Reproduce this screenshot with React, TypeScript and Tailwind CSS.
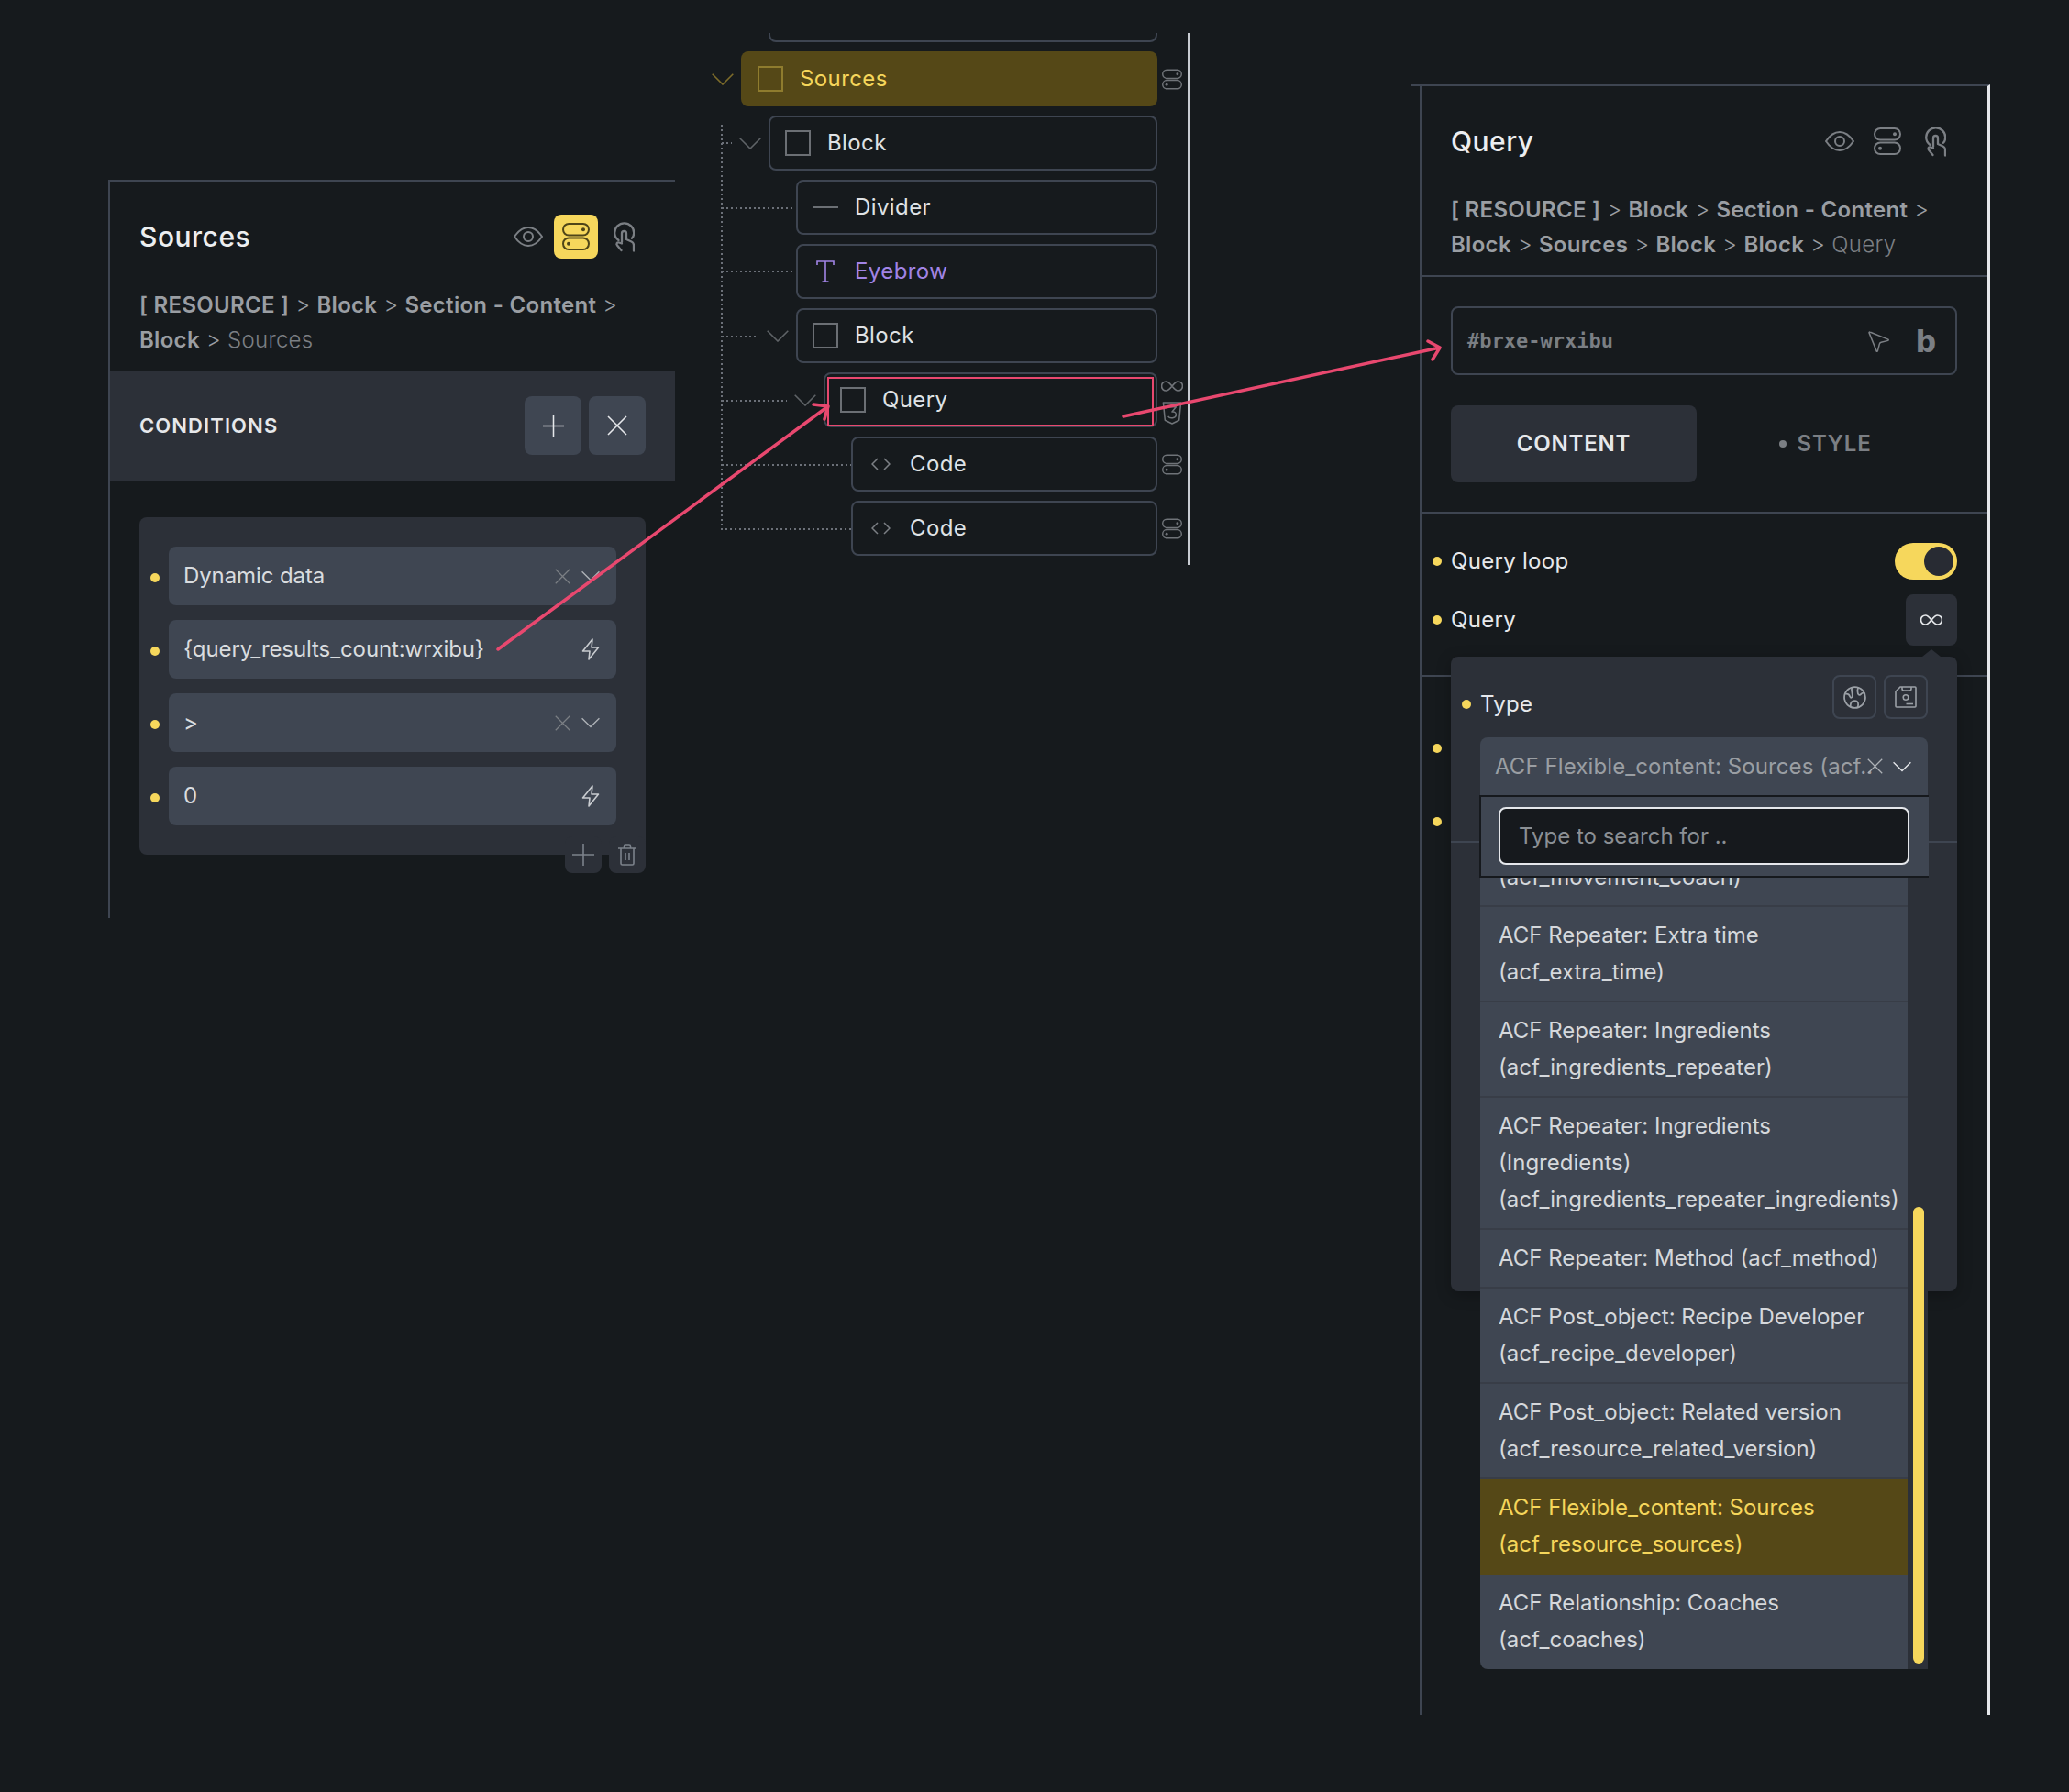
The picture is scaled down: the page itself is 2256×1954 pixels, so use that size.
import React from "react";
import { MousePointer2 } from "lucide-react";

type IP = { className?: string };

const Chevron = ({ className = "" }: IP) => (
  <svg viewBox="0 0 24 13" fill="none" stroke="currentColor" strokeWidth="1.6" className={className}>
    <polyline points="0.7,0.7 12,12 23.3,0.7" />
  </svg>
);
const Cross = ({ className = "" }: IP) => (
  <svg viewBox="0 0 22 22" fill="none" stroke="currentColor" strokeWidth="1.6" className={className}>
    <path d="M1 1 21 21M21 1 1 21" />
  </svg>
);
const Plus = ({ className = "" }: IP) => (
  <svg viewBox="0 0 24 24" fill="none" stroke="currentColor" strokeWidth="1.6" className={className}>
    <path d="M12 0V24M0 12H24" />
  </svg>
);
const Bolt = ({ className = "" }: IP) => (
  <svg viewBox="0 0 20 24" fill="none" stroke="currentColor" strokeWidth="1.6" strokeLinejoin="round" className={className}>
    <path d="M12 1 1.500 14H9L8 23 18.500 10H11Z" />
  </svg>
);
const Eye = ({ className = "" }: IP) => (
  <svg viewBox="0 0 32 22" fill="none" stroke="currentColor" strokeWidth="2" className={className}>
    <path d="M1 11C6 3.500 12 1 16 1s10 2.500 15 10c-5 7.500-11 10-15 10S6 18.500 1 11Z" />
    <circle cx="16" cy="11" r="5" />
  </svg>
);
const Toggles = ({ className = "" }: IP) => (
  <svg viewBox="0 0 30 30" fill="none" stroke="currentColor" strokeWidth="2" className={className}>
    <rect x="1" y="1" width="28" height="12.500" rx="6.200" />
    <rect x="1" y="16.500" width="28" height="12.500" rx="6.200" />
    <circle cx="23" cy="7.200" r="2" fill="currentColor" stroke="none" />
    <circle cx="7" cy="22.800" r="2" fill="currentColor" stroke="none" />
  </svg>
);
const Touch = ({ className = "" }: IP) => (
  <svg viewBox="0 0 23 33" fill="none" stroke="currentColor" strokeWidth="2.300" strokeLinecap="round" strokeLinejoin="round" className={className}>
    <path d="M5.500 20C2.800 18 1.200 15 1.200 11.800a10.500 10.500 0 0 1 21 0c0 2.500-.8 4.500-2.200 6" />
    <path d="M9 22V12.500a2.500 2.500 0 0 1 5 0V19l5.500 2.500c1.700.8 2.500 2 2.500 3.800V31.500" />
    <path d="M9 23.500 6 22.500c-2-.6-3.400 1.500-2 3L8.500 31" />
  </svg>
);
const Inf = ({ className = "" }: IP) => (
  <svg viewBox="0 0 24 12" fill="none" stroke="currentColor" strokeWidth="1.700" className={className}>
    <path d="M12 6C9 2.200 7 1 5.500 1a5 5 0 0 0 0 10C7 11 9 9.800 12 6s5-5 6.500-5a5 5 0 0 1 0 10C17 11 15 9.800 12 6Z" />
  </svg>
);
const Shield = ({ className = "" }: IP) => (
  <svg viewBox="0 0 22 26" fill="none" stroke="currentColor" strokeWidth="1.600" strokeLinejoin="round" className={className}>
    <path d="M1 1H21L19 21L11 25L3 21Z" />
    <path d="M6 6H15.500L11 11.500C14 11 16 12.500 15.500 15.500C15 18.500 8.500 20 6.500 16.500" />
  </svg>
);
const CodeIcon = ({ className = "" }: IP) => (
  <svg viewBox="0 0 21 14" fill="none" stroke="currentColor" strokeWidth="1.500" className={className}>
    <polyline points="7,1 1,7 7,13" />
    <polyline points="14,1 20,7 14,13" />
  </svg>
);
const SerifT = ({ className = "" }: IP) => (
  <svg viewBox="0 0 20 24" fill="none" stroke="currentColor" strokeWidth="1.600" className={className}>
    <path d="M1 5V1H19V5M10 1V23M6.500 23H13.500" />
  </svg>
);
const Trash = ({ className = "" }: IP) => (
  <svg viewBox="0 0 20 24" fill="none" stroke="currentColor" strokeWidth="1.600" className={className}>
    <path d="M0 5H20M3 5V21.500a1.500 1.500 0 0 0 1.500 1.500h11a1.500 1.500 0 0 0 1.500-1.500V5M6.500 5V2.500a1.500 1.500 0 0 1 1.500-1.500h4a1.500 1.500 0 0 1 1.500 1.500V5M8 10V18M12 10V18" />
  </svg>
);
const Globe = ({ className = "" }: IP) => (
  <svg viewBox="0 0 24 24" fill="none" stroke="currentColor" strokeWidth="1.700" strokeLinejoin="round" className={className}>
    <circle cx="12" cy="12" r="11" />
    <path d="M2.200 8.500C4.500 8 6 9 6.800 11c.8 2 2.400 1.500 2.600-.5C9.600 7.500 8 5 8.800 1.500" />
    <path d="M15.500 1.500c-1 2.500-1.200 4.500-.3 6.500 .9 2 2.300 1.800 3.300.5 1-1.200 2.500-1.300 3.700-.6" />
    <path d="M7.500 22c-.4-3 .5-5.500 2.800-6.300 2.200-.8 4.300 0 5 2 .6 1.800 0 3.200-.3 5" />
  </svg>
);
const Floppy = ({ className = "" }: IP) => (
  <svg viewBox="0 0 24 24" fill="none" stroke="currentColor" strokeWidth="1.600" className={className}>
    <path d="M6 1H22a1 1 0 0 1 1 1V22a1 1 0 0 1-1 1H2a1 1 0 0 1-1-1V6Z" />
    <path d="M8 1V3a2 2 0 0 0 2 2h6a2 2 0 0 0 2-2V1" />
    <circle cx="12" cy="12.500" r="2.800" />
    <path d="M12.500 19.500H20" />
  </svg>
);

const Dot = ({ className = "" }: IP) => <span className={`w-[10px] h-[10px] rounded-full bg-[#f6d75c] shrink-0 ${className}`} />;

const Box = () => <span className="block w-[28px] h-[28px] border-2 border-[#6b6f74]" />;

const Crumb = ({ parts, last }: { parts: string[]; last: string }) => (
  <p className="text-[24px] leading-[37.500px] tracking-[0.3px] text-[#9a9ea3]">
    {parts.map((p, i) => (
      <React.Fragment key={p + i}>
        <span className="font-semibold">{p}</span>
        <span className="font-light"> &gt; </span>
      </React.Fragment>
    ))}
    <span className="font-light text-[#7b7f84]">{last}</span>
  </p>
);

const HeadIcons = ({ active }: { active?: boolean }) => (
  <div className="flex gap-[4px] text-[#7b7f84]">
    <span className="w-[48px] h-[48px] flex items-center justify-center">
      <Eye className="w-[32px] h-[22px]" />
    </span>
    <span className={`w-[48px] h-[48px] flex items-center justify-center rounded-lg ${active ? "bg-[#f6d75c] text-[#4f4518]" : ""}`}>
      <Toggles className="w-[30px] h-[30px]" />
    </span>
    <span className="w-[48px] h-[48px] flex items-center justify-center">
      <Touch className="w-[23px] h-[33px]" />
    </span>
  </div>
);

const condRows = [
  { t: "Dynamic data", sel: true },
  { t: "{query_results_count:wrxibu}", sel: false },
  { t: ">", sel: true },
  { t: "0", sel: false },
];

function LeftPanel() {
  return (
    <section className="absolute left-[118px] top-[196px] w-[618px] h-[805px] border-t-2 border-l-2 border-[#3e4551]">
      <div className="pl-[32px] pr-[32px] pt-[36px] pb-[15px]">
        <div className="flex items-center justify-between h-[48px]">
          <h2 className="text-[30px] font-medium tracking-[0.5px] text-[#eceef0]">Sources</h2>
          <HeadIcons active />
        </div>
        <div className="mt-[32px] w-[540px]">
          <Crumb parts={["[ RESOURCE ]", "Block", "Section - Content", "Block"]} last="Sources" />
        </div>
      </div>
      <div className="h-[120px] bg-[#2c3038] pl-[32px] pr-[32px] flex items-center justify-between">
        <span className="text-[22px] font-semibold text-[#e6e8eb] tracking-[1.1px]">CONDITIONS</span>
        <div className="flex gap-[8px] text-[#e6e8eb]">
          <span className="w-[62px] h-[64px] rounded-lg bg-[#3f4652] flex items-center justify-center">
            <Plus className="w-[23px] h-[23px]" />
          </span>
          <span className="w-[62px] h-[64px] rounded-lg bg-[#3f4652] flex items-center justify-center">
            <Cross className="w-[22px] h-[22px]" />
          </span>
        </div>
      </div>
      <div className="ml-[32px] mt-[40px] w-[552px]">
        <div className="h-[368px] rounded-lg bg-[#2c3038] pt-[32px] flex flex-col gap-[16px]">
          {condRows.map((r) => (
            <div key={r.t} className="flex items-center pl-[12px] gap-[10px]">
              <Dot className="mt-[3px]" />
              <div className="w-[488px] h-[64px] rounded-lg bg-[#3f4652] flex items-center pl-[16px] pr-[18px] text-[24px] tracking-[-0.1px] text-[#d9dcdf]">
                <span className="flex-1 -mt-[1px]">{r.t}</span>
                {r.sel ? (
                  <span className="flex items-center gap-[12px]">
                    <Cross className="w-[17px] h-[17px] text-[#7b7f84]" />
                    <Chevron className="w-[20px] h-[12px] text-[#aeb2b7]" />
                  </span>
                ) : (
                  <Bolt className="w-[20px] h-[24px] text-[#c9ccd0]" />
                )}
              </div>
            </div>
          ))}
        </div>
        <div className="flex justify-end gap-[8px] -mt-[20px] text-[#7c828b]">
          <span className="w-[40px] h-[40px] rounded-lg bg-[#2c3038] flex justify-center items-center">
            <Plus className="w-[24px] h-[24px]" />
          </span>
          <span className="w-[40px] h-[40px] rounded-lg bg-[#2c3038] flex justify-center items-center">
            <Trash className="w-[20px] h-[24px]" />
          </span>
        </div>
      </div>
    </section>
  );
}

const Side = ({ kind }: { kind: "toggle" | "query" | "none" }) => (
  <div className="w-[33px] pr-[1px] flex flex-col items-center justify-center gap-[11px] text-[#6f7378]">
    {kind === "toggle" && <Toggles className="w-[22px] h-[23px]" />}
    {kind === "query" && (
      <>
        <Inf className="w-[24px] h-[12px] mt-[6px]" />
        <Shield className="w-[22px] h-[25px]" />
      </>
    )}
  </div>
);

function TreeRow({
  pad,
  label,
  icon,
  chevron,
  side = "none",
  labelClass = "text-[#dfe2e5]",
  boxClass = "border-2 border-[#3e4551]",
  chevClass = "text-[#5f6367]",
  children,
}: {
  pad: string;
  label: string;
  icon: React.ReactNode;
  chevron?: boolean;
  side?: "toggle" | "query" | "none";
  labelClass?: string;
  boxClass?: string;
  chevClass?: string;
  children?: React.ReactNode;
}) {
  return (
    <div className={`flex h-[60px] ${pad}`}>
      <div className="w-[40px] flex items-center justify-center">
        {chevron && <Chevron className={`w-[24px] h-[13px] ${chevClass}`} />}
      </div>
      <div className={`relative flex-1 rounded-lg flex items-center pl-[16px] ${boxClass}`}>
        <span className="w-[28px] flex items-center justify-center shrink-0">{icon}</span>
        <span className={`ml-[18px] text-[24px] tracking-[0.4px] ${labelClass}`}>{label}</span>
        {children}
      </div>
      <Side kind={side} />
    </div>
  );
}

function Tree() {
  return (
    <section className="absolute left-[760px] top-[36px] w-[538px] h-[580px] border-r-[3px] border-[#c8ccd2]">
      <svg className="absolute left-0 top-0 w-[200px] h-[560px]" fill="none" stroke="#6b7078" strokeWidth="2" strokeDasharray="2 3">
        <path d="M27 100V541H168M27 120H38M27 191H106M27 260H106M27 331H66M27 401H98M27 471H168" />
      </svg>
      <div className="relative flex flex-col gap-[10px]">
        <div className="h-[10px] ml-[78px] w-[424px] border-x-2 border-b-2 border-[#3e4551] rounded-b-lg" />
        <TreeRow
          pad="pl-[8px]"
          label="Sources"
          icon={<span className="block w-[28px] h-[28px] border-2 border-[#8f7c2e]" />}
          chevron
          chevClass="text-[#7d6c2a]"
          side="toggle"
          labelClass="text-[#f5d65b]"
          boxClass="bg-[#554817] pl-[18px]"
        />
        <TreeRow pad="pl-[38px]" label="Block" icon={<Box />} chevron />
        <TreeRow pad="pl-[68px]" label="Divider" icon={<span className="block w-[28px] h-[2px] bg-[#6b6f74]" />} />
        <TreeRow
          pad="pl-[68px]"
          label="Eyebrow"
          icon={<SerifT className="w-[20px] h-[24px] text-[#a184e6]" />}
          labelClass="text-[#a184e6]"
        />
        <TreeRow pad="pl-[68px]" label="Block" icon={<Box />} chevron />
        <TreeRow pad="pl-[98px]" label="Query" icon={<Box />} chevron side="query">
          <span className="absolute left-[2px] top-[3px] w-[356px] h-[54px] border-2 border-[#e8486f]" />
        </TreeRow>
        <TreeRow pad="pl-[128px]" label="Code" icon={<CodeIcon className="w-[21px] h-[14px] text-[#7b7f84]" />} side="toggle" />
        <TreeRow pad="pl-[128px]" label="Code" icon={<CodeIcon className="w-[21px] h-[14px] text-[#7b7f84]" />} side="toggle" />
      </div>
    </section>
  );
}

const items = [
  "ACF Repeater: Extra time (acf_extra_time)",
  "ACF Repeater: Ingredients (acf_ingredients_repeater)",
  "ACF Repeater: Ingredients (Ingredients) (acf_ingredients_repeater_ingredients)",
  "ACF Repeater: Method (acf_method)",
  "ACF Post_object: Recipe Developer (acf_recipe_developer)",
  "ACF Post_object: Related version (acf_resource_related_version)",
];

const itemClass = "px-[20px] pt-[11px] pb-[11px] border-b-2 border-[#383d47] text-[24px] leading-[40px] text-[#d5d8dc]";

function Popover() {
  return (
    <div className="absolute left-[32px] top-[622px] w-[552px] h-[692px] rounded-lg bg-[#2c3038] pt-[20px] shadow-[0_4px_16px_rgba(0,0,0,0.25)]">
      <span className="absolute left-[514px] -top-[8px] w-0 h-0 border-x-[10px] border-x-transparent border-b-[8px] border-b-[#2c3038]" />
      <span className="absolute left-0 top-[201px] w-full h-[2px] bg-[#3e4551]" />
      <div className="flex items-start pl-[12px] pr-[32px]">
        <div className="flex items-center gap-[10px] h-[24px] mt-[20px]">
          <Dot />
          <span className="text-[24px] tracking-[0.3px] text-[#e6e8eb]">Type</span>
        </div>
        <div className="ml-auto flex gap-[8px] text-[#9ba0a6]">
          <span className="w-[48px] h-[48px] rounded-lg border-2 border-[#3e4551] flex items-center justify-center">
            <Globe className="w-[25px] h-[25px]" />
          </span>
          <span className="w-[48px] h-[48px] rounded-lg border-2 border-[#3e4551] flex items-center justify-center">
            <Floppy className="w-[24px] h-[24px]" />
          </span>
        </div>
      </div>
      <div className="relative mt-[20px] ml-[32px] w-[488px]">
        <div className="h-[63px] rounded-t-lg bg-[#3f4652] flex items-center pl-[16px] pr-[18px]">
          <span className="w-[0px] flex-1 text-[24px] tracking-[0.1px] text-[#9a9ea3] whitespace-nowrap">ACF Flexible_content: Sources (acf..</span>
          <Cross className="w-[17px] h-[17px] text-[#aeb2b7] mr-[11px] shrink-0" />
          <Chevron className="w-[20px] h-[12px] text-[#e6e8eb] shrink-0" />
        </div>
        <div className="h-[90px] -ml-[1px] w-[490px] border-y-2 border-l-2 border-[#16191d] bg-[#3f4652] pl-[19px] pr-[21px] pt-[11px]">
          <div className="h-[63px] rounded-lg border-2 border-[#e5e7eb] bg-[#16191d] flex items-center pl-[20px] text-[24px] text-[#8b8f94]">
            Type to search for ..
          </div>
        </div>
        <div className="flex h-[863px] overflow-hidden">
          <div className="w-[466px] bg-[#3f4652] rounded-bl-lg flex flex-col">
            <div className="h-[32px] overflow-hidden flex flex-col justify-end px-[20px] pb-[10px] border-b-2 border-[#383d47] text-[24px] leading-[40px] text-[#d5d8dc]">
              <span className="shrink-0 whitespace-nowrap">(acf_movement_coach)</span>
            </div>
            {items.map((t) => (
              <div key={t} className={itemClass}>{t}</div>
            ))}
            <div className="px-[20px] pt-[11px] pb-[13px] bg-[#554817] text-[24px] leading-[40px] text-[#f5d65b]">
              ACF Flexible_content: Sources (acf_resource_sources)
            </div>
            <div className="px-[20px] pt-[11px] pb-[11px] text-[24px] leading-[40px] text-[#d5d8dc]">
              ACF Relationship: Coaches (acf_coaches)
            </div>
          </div>
          <div className="flex-1 bg-[#2c3038] pl-[6px] pt-[359px]">
            <span className="block w-[12px] h-[498px] rounded-full bg-[#f6d75c]" />
          </div>
        </div>
      </div>
    </div>
  );
}

function RightPanel() {
  return (
    <section className="absolute left-[1538px] top-[92px] w-[632px] h-[1778px] border-t-2 border-r-[3px] border-t-[#3e4551] border-r-[#e5e7eb]">
      <div className="relative ml-[10px] h-full border-l-2 border-[#3e4551]">
        <div className="pl-[32px] pr-[33px] pt-[36px] pb-[15px] border-b-2 border-[#3e4551]">
          <div className="flex items-center justify-between h-[48px]">
            <h2 className="text-[30px] font-medium tracking-[0.5px] text-[#eceef0]">Query</h2>
            <HeadIcons />
          </div>
          <div className="mt-[32px]">
            <Crumb parts={["[ RESOURCE ]", "Block", "Section - Content", "Block", "Sources", "Block", "Block"]} last="Query" />
          </div>
        </div>
        <div className="pl-[32px] pr-[33px] pt-[32px] pb-[32px] border-b-2 border-[#3e4551]">
          <div className="h-[75px] rounded-lg border-2 border-[#3e4551] flex items-center pl-[16px] pr-[20px]">
            <span className="flex-1 text-[22px] font-bold text-[#7b7f84] [font-family:'DejaVu_Sans_Mono',monospace]">#brxe-wrxibu</span>
            <MousePointer2 className="w-[30px] h-[30px] text-[#7b7f84]" strokeWidth={1.2} />
            <span className="ml-[25px] w-[24px] text-center text-[34px] leading-none font-extrabold text-[#7b7f84]">b</span>
          </div>
          <div className="mt-[33px] flex h-[84px]">
            <span className="w-[268px] rounded-lg bg-[#2c3038] flex items-center justify-center text-[24px] font-semibold tracking-[0.8px] text-[#e6e8eb]">CONTENT</span>
            <span className="flex-1 flex items-center justify-center gap-[12px] pr-[4px] text-[24px] font-semibold tracking-[0.8px] text-[#7b7f84]">
              <span className="w-[8px] h-[8px] rounded-full bg-[#7b7f84]" />
              STYLE
            </span>
          </div>
        </div>
        <div className="pl-[32px] pr-[33px] pt-[32px] pb-[32px] border-b-2 border-[#3e4551]">
          <div className="flex items-center justify-between h-[40px]">
            <div className="flex items-center gap-[10px] -ml-[20px]">
              <Dot />
              <span className="text-[24px] tracking-[0.3px] text-[#e6e8eb]">Query loop</span>
            </div>
            <span className="w-[68px] h-[40px] rounded-full bg-[#f6d75c] flex items-center justify-end pr-[4px]">
              <span className="w-[32px] h-[32px] rounded-full bg-[#282b33]" />
            </span>
          </div>
          <div className="mt-[16px] flex items-center justify-between h-[56px]">
            <div className="flex items-center gap-[10px] -ml-[20px]">
              <Dot />
              <span className="text-[24px] tracking-[0.3px] text-[#e6e8eb]">Query</span>
            </div>
            <span className="w-[56px] h-[56px] rounded-lg bg-[#2c3038] flex items-center justify-center text-[#e6e8eb]">
              <Inf className="w-[24px] h-[12px]" />
            </span>
          </div>
        </div>
        <div className="pl-[12px] pt-[73px] flex flex-col gap-[70px]">
          <Dot />
          <Dot />
        </div>
        <Popover />
      </div>
    </section>
  );
}

export default function App() {
  return (
    <div className="relative w-[2256px] h-[1954px] overflow-hidden bg-[#161a1d] [font-family:Inter,sans-serif]">
      <LeftPanel />
      <Tree />
      <RightPanel />
      <svg className="absolute left-0 top-0 w-[2256px] h-[1954px] pointer-events-none" fill="none" stroke="#e8486f" strokeWidth="3.500" strokeLinecap="round" strokeLinejoin="round">
        <path d="M543 708 903 443M887 441 903 443 899 457" />
        <path d="M1225 454 1570 379M1557 372 1570 379 1562 392" />
      </svg>
    </div>
  );
}
